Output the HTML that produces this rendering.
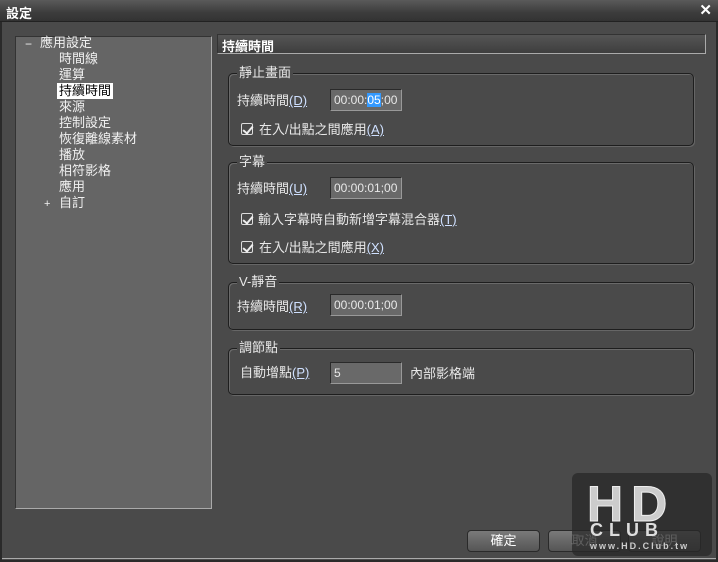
<!DOCTYPE html>
<html><head><meta charset="utf-8"><style>
*{margin:0;padding:0;box-sizing:border-box}
body{width:718px;height:562px;overflow:hidden;background:#222;font-family:"Liberation Sans","Noto Sans CJK TC",sans-serif;font-size:12px;color:#e8e8e8}
.a{position:absolute}
#win{left:0;top:0;width:718px;height:562px;background:#4a4a4a;border:2px solid #2a2a2a;border-radius:4px 4px 0 0}
#title{left:0;top:0;width:718px;height:22px;background:linear-gradient(#5a5a5a,#3c3c3c 60%,#333);border-bottom:1px solid #222}
#title span{position:absolute;left:6px;top:3px;font-weight:bold;font-size:13px;color:#fff}
#close{right:6px;top:1px;font-weight:bold;font-size:15px;color:#fff}
#tree{left:15px;top:36px;width:197px;height:473px;background:#656565;border-top:1px solid #333;border-left:1px solid #333;border-right:1px solid #aaa;border-bottom:1px solid #aaa}
.t{position:absolute;font-size:13px;color:#f0f0f0;line-height:16px}
#hdr{left:217px;top:34px;width:489px;height:20px;background:linear-gradient(#555,#3e3e3e);border-top:1px solid #333;border-left:1px solid #333;border-right:1px solid #aaa;border-bottom:1px solid #aaa}
#hdr span{position:absolute;left:4px;top:1px;font-weight:bold;font-size:13px;color:#fff}
.g{position:absolute;left:228px;width:466px;border:1px solid #1e1e1e;box-shadow:1px 1px 0 #6a6a6a inset,1px 1px 0 #666;border-radius:5px}
.gl{position:absolute;left:8px;top:-9px;background:#4a4a4a;padding:0 2px;font-size:13px;line-height:16px}
.in{position:absolute;left:330px;width:72px;height:22px;background:#696969;border-top:1px solid #2a2a2a;border-left:1px solid #2a2a2a;border-right:1px solid #999;border-bottom:1px solid #999;font-size:12px;padding:3px 0 0 3px;color:#e8e8e8}
.lb{position:absolute;font-size:13px;line-height:16px}
.u{text-decoration:underline;color:#cfe0ff}
.cb{position:absolute;width:12px;height:12px;border:1px solid #ddd;border-radius:2px}
.cb:after{content:"";position:absolute;left:3px;top:0px;width:4px;height:8px;border-right:2px solid #eee;border-bottom:2px solid #eee;transform:rotate(40deg)}
.btn{position:absolute;top:530px;height:22px;width:73px;border-radius:4px;background:linear-gradient(#7a7a7a,#555);border:1px solid #2a2a2a;color:#fff;text-align:center;line-height:20px;font-size:13px}
#wm{left:572px;top:473px;width:140px;height:83px;background:rgba(40,40,40,.75);border-radius:6px}
</style></head><body>
<div id="win" class="a"></div>
<div id="title" class="a"><span>設定</span><div id="close" class="a">✕</div></div>
<div id="tree" class="a"></div>
<div class="t" style="left:25px;top:36px;font-size:12px">−</div>
<div class="t" style="left:40px;top:35px">應用設定</div>
<div class="t" style="left:59px;top:51px">時間線</div>
<div class="t" style="left:59px;top:67px">運算</div>
<div class="t" style="left:57px;top:83px;background:#fff;color:#000;padding:0 2px">持續時間</div>
<div class="t" style="left:59px;top:99px">來源</div>
<div class="t" style="left:59px;top:115px">控制設定</div>
<div class="t" style="left:59px;top:131px">恢復離線素材</div>
<div class="t" style="left:59px;top:147px">播放</div>
<div class="t" style="left:59px;top:163px">相符影格</div>
<div class="t" style="left:59px;top:179px">應用</div>
<div class="t" style="left:44px;top:196px;font-size:11px">+</div>
<div class="t" style="left:59px;top:195px">自訂</div>
<div id="hdr" class="a"><span>持續時間</span></div>

<div class="g" style="top:73px;height:73px"><div class="gl">靜止畫面</div></div>
<div class="lb" style="left:237px;top:93px">持續時間<span class="u">(D)</span></div>
<div class="in" style="top:89px">00:00:<span style="background:#3399ff;color:#fff">05</span>;00</div>
<div class="cb" style="left:241px;top:123px"></div>
<div class="lb" style="left:259px;top:122px">在入/出點之間應用<span class="u">(A)</span></div>

<div class="g" style="top:162px;height:102px"><div class="gl">字幕</div></div>
<div class="lb" style="left:237px;top:181px">持續時間<span class="u">(U)</span></div>
<div class="in" style="top:177px">00:00:01;00</div>
<div class="cb" style="left:241px;top:213px"></div>
<div class="lb" style="left:258px;top:212px">輸入字幕時自動新增字幕混合器<span class="u">(T)</span></div>
<div class="cb" style="left:241px;top:241px"></div>
<div class="lb" style="left:259px;top:240px">在入/出點之間應用<span class="u">(X)</span></div>

<div class="g" style="top:282px;height:48px"><div class="gl">V-靜音</div></div>
<div class="lb" style="left:237px;top:299px">持續時間<span class="u">(R)</span></div>
<div class="in" style="top:294px">00:00:01;00</div>

<div class="g" style="top:348px;height:47px"><div class="gl">調節點</div></div>
<div class="lb" style="left:240px;top:365px">自動增點<span class="u">(P)</span></div>
<div class="in" style="top:362px">5</div>
<div class="lb" style="left:410px;top:366px">內部影格端</div>

<div class="a" style="left:2px;top:558px;width:714px;height:1px;background:#aaa"></div>
<div class="btn" style="left:467px">確定</div>
<div class="btn" style="left:548px">取消</div>
<div class="btn" style="left:628px">說明</div>
<div id="wm" class="a">
<div class="a" style="left:15px;top:6px;font:bold 50px/50px 'Liberation Sans',sans-serif;color:#ccc;letter-spacing:8px;-webkit-text-stroke:1px #eee">HD</div>
<div class="a" style="left:18px;top:48px;font:bold 18px/18px 'Liberation Sans',sans-serif;color:#ddd;letter-spacing:6px">CLUB</div>
<div class="a" style="left:18px;top:68px;font:bold 9px/10px 'Liberation Sans',sans-serif;color:#ccc;letter-spacing:2px">www.HD.Club.tw</div>
</div>
</body></html>
